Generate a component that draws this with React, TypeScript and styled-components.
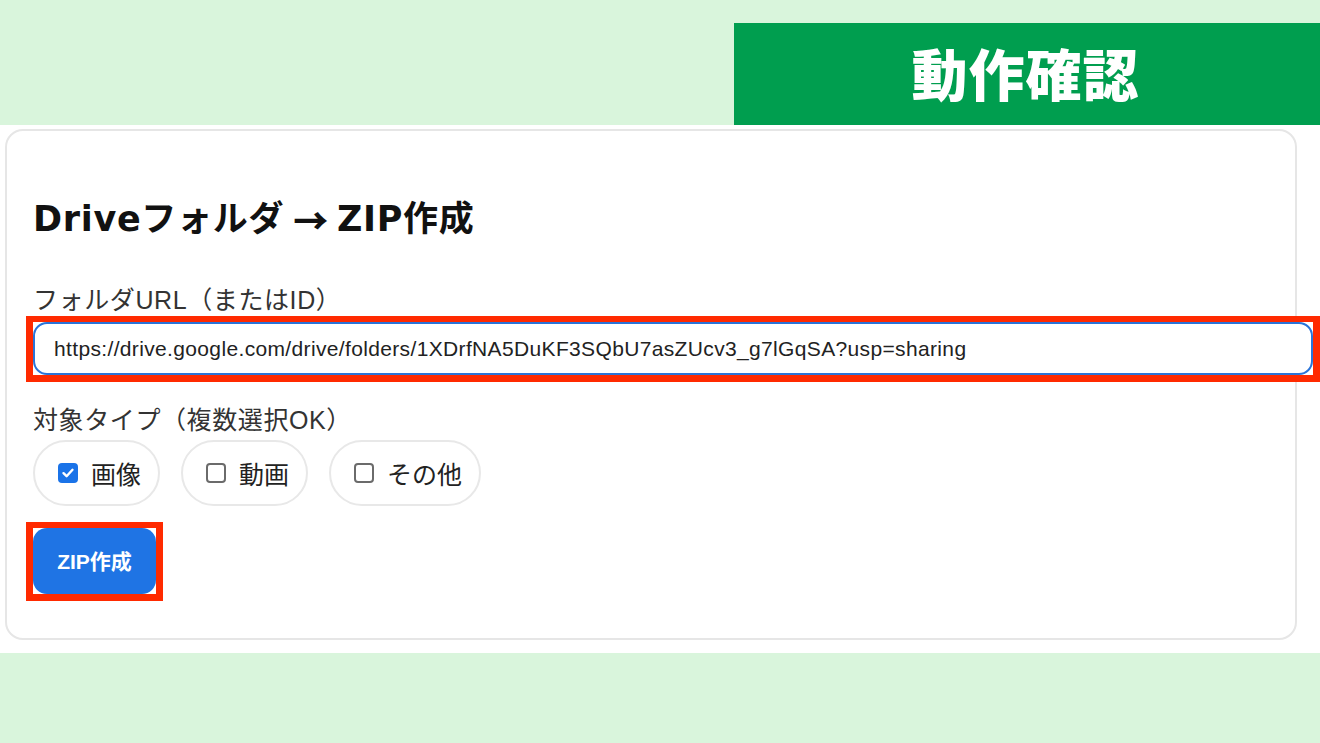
import React from "react";
import styled, { createGlobalStyle } from "styled-components";

const GlobalStyle = createGlobalStyle`
  html, body {
    margin: 0;
    padding: 0;
    overflow: hidden;
    background: #d9f5dc;
  }
  body {
    font-family: "Liberation Sans", "Noto Sans CJK JP", sans-serif;
    color: #222;
  }
  * { box-sizing: border-box; }
`;

const Page = styled.div`
  width: 1320px;
  height: 743px;
  display: flex;
  flex-direction: column;
  background: #d9f5dc;
`;

const TopBand = styled.header`
  height: 125px;
  display: flex;
  justify-content: flex-end;
  align-items: flex-end;
`;

const Badge = styled.div`
  width: 586px;
  height: 102px;
  background: #009e4f;
  color: #fff;
  display: flex;
  align-items: center;
  justify-content: center;
  font-family: "Noto Sans CJK JP", sans-serif;
  font-weight: 900;
  font-size: 56px;
  letter-spacing: 1px;
  padding: 0 3px 5px 0;
`;

const Sheet = styled.main`
  background: #fff;
  height: 528px;
  padding: 4px 23px 14px 5px;
`;

const Card = styled.section`
  height: 511px;
  border: 2px solid #e6e6e6;
  border-radius: 18px;
  padding: 68px 0 0 26px;
  display: flex;
  flex-direction: column;
  align-items: flex-start;
`;

const Title = styled.h1`
  margin: 0;
  height: 40px;
  display: flex;
  align-items: center;
  white-space: nowrap;
  font-size: 35px;
  line-height: 40px;
  font-weight: 700;
  color: #111;
  font-family: "DejaVu Sans", "Noto Sans CJK JP", sans-serif;
  letter-spacing: 0.7px;
`;

const Arrow = styled.span`
  font-family: "Noto Sans CJK JP", sans-serif;
  font-weight: 900;
  margin: 0 8px 0 9px;
`;

const FieldLabel = styled.div<{ $gap: number }>`
  margin-top: ${(p) => p.$gap}px;
  height: 30px;
  display: flex;
  align-items: center;
  white-space: nowrap;
  font-size: 25px;
  line-height: 30px;
  letter-spacing: 0.6px;
  color: #333;
  font-family: "Liberation Sans", "Noto Sans CJK JP", sans-serif;
`;

const Highlight = styled.div<{ $gap: number }>`
  margin-top: ${(p) => p.$gap}px;
  margin-left: -7px;
  border: 7px solid #ff2a00;
  border-top-width: 6px;
  display: flex;
  background: #fff;
`;

const UrlInput = styled.input`
  width: 1280px;
  height: 53px;
  border: 2px solid #2a74d8;
  border-radius: 14px;
  padding: 0 0 0 19px;
  font-family: "Liberation Sans", sans-serif;
  font-size: 21px;
  letter-spacing: 0.35px;
  color: #222;
  outline: none;
  background: #fff;
`;

const PillRow = styled.div`
  margin-top: 5px;
  display: flex;
  gap: 21px;
`;

const Pill = styled.label`
  height: 66px;
  padding: 0 17px 0 23px;
  border: 2px solid #e8e8e8;
  border-radius: 33px;
  display: flex;
  align-items: center;
  gap: 13px;
  font-family: "Noto Sans CJK JP", sans-serif;
  font-size: 25px;
  line-height: 30px;
  color: #222;
`;

const Box = styled.span<{ $checked: boolean }>`
  width: 20px;
  height: 20px;
  border-radius: 4px;
  display: flex;
  align-items: center;
  justify-content: center;
  background: ${(p) => (p.$checked ? "#1a73e8" : "#fff")};
  border: ${(p) => (p.$checked ? "none" : "2px solid #6b6b6b")};
`;

const ZipButton = styled.button`
  width: 123px;
  height: 66px;
  border: none;
  border-radius: 14px;
  background: #1f74e4;
  color: #fff;
  font-family: "Liberation Sans", "Noto Sans CJK JP", sans-serif;
  font-weight: 700;
  font-size: 21px;
  padding: 0 0 3px;
`;

const options = [
  { label: "画像", checked: true },
  { label: "動画", checked: false },
  { label: "その他", checked: false },
];

export default function App() {
  return (
    <>
      <GlobalStyle />
      <Page>
        <TopBand>
          <Badge>動作確認</Badge>
        </TopBand>
        <Sheet>
          <Card>
            <Title>
              Driveフォルダ<Arrow>→</Arrow>ZIP作成
            </Title>
            <FieldLabel $gap={46}>フォルダURL（またはID）</FieldLabel>
            <Highlight $gap={1}>
              <UrlInput
                readOnly
                value="https://drive.google.com/drive/folders/1XDrfNA5DuKF3SQbU7asZUcv3_g7lGqSA?usp=sharing"
              />
            </Highlight>
            <FieldLabel $gap={23}>対象タイプ（複数選択OK）</FieldLabel>
            <PillRow>
              {options.map((o) => (
                <Pill key={o.label}>
                  <Box $checked={o.checked}>
                    {o.checked && (
                      <svg width="14" height="14" viewBox="0 0 14 14">
                        <path
                          d="M2.5 7.2 L5.6 10.2 L11.5 3.8"
                          fill="none"
                          stroke="#fff"
                          strokeWidth="2.4"
                          strokeLinecap="round"
                          strokeLinejoin="round"
                        />
                      </svg>
                    )}
                  </Box>
                  {o.label}
                </Pill>
              ))}
            </PillRow>
            <Highlight $gap={16}>
              <ZipButton>ZIP作成</ZipButton>
            </Highlight>
          </Card>
        </Sheet>
      </Page>
    </>
  );
}
